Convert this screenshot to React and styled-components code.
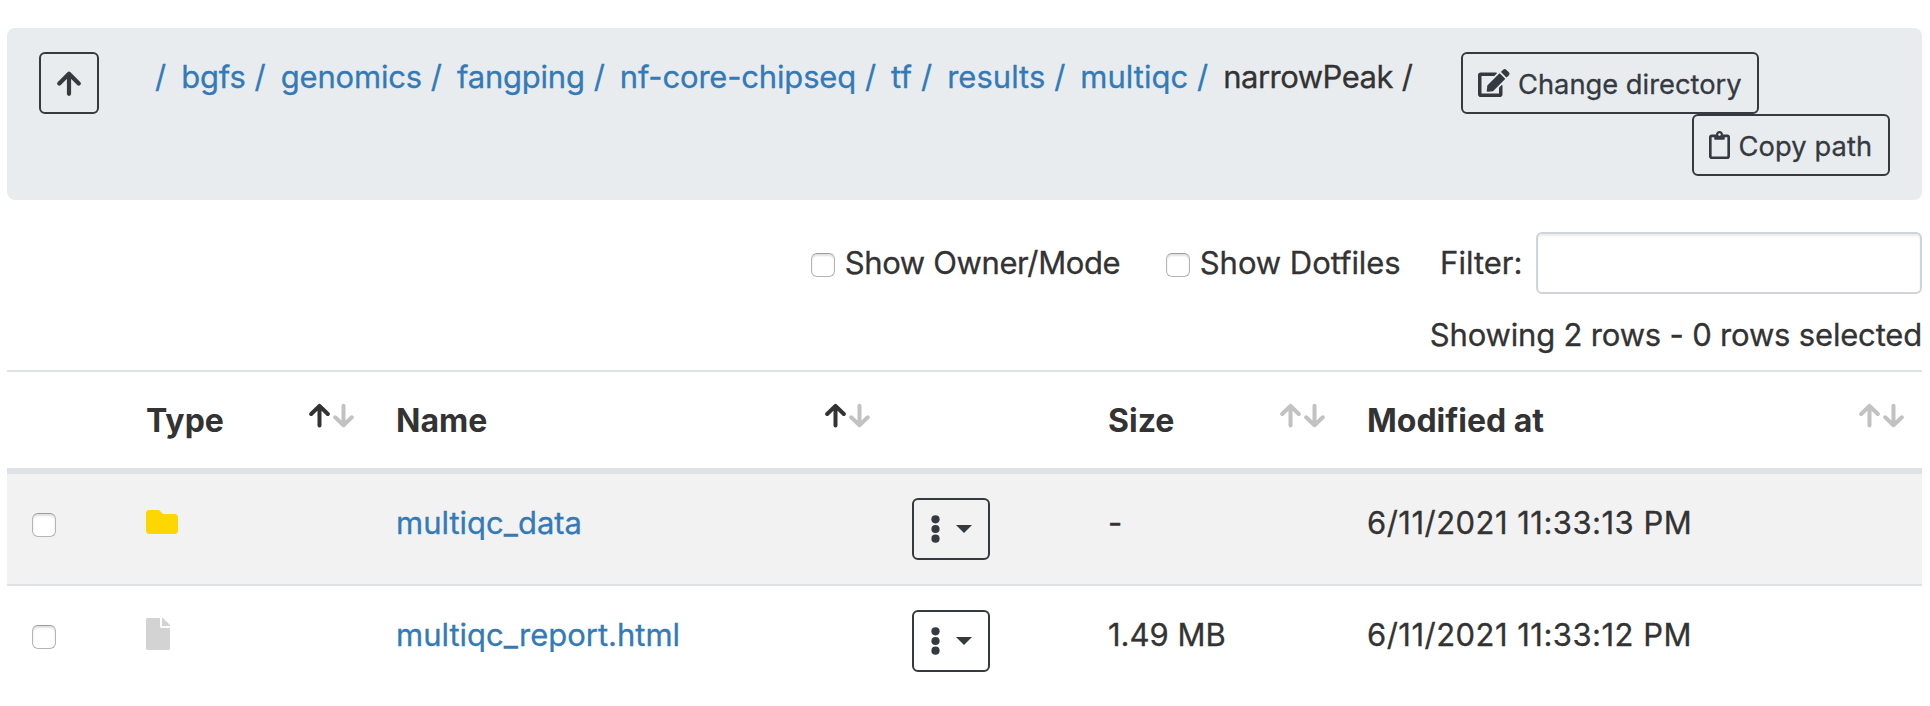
import React from "react";
import styled, { createGlobalStyle } from "styled-components";
import { FaEdit, FaRegClipboard, FaFolder, FaFile } from "react-icons/fa";

const GlobalStyle = createGlobalStyle`
  *, *::before, *::after { box-sizing: border-box; }
  body {
    margin: 0;
    background: #fff;
    color: #333;
    font-family: Inter, "Liberation Sans", sans-serif;
    font-size: 31px;
    line-height: 48px;
    -webkit-text-stroke-width: 0.3px;
  }
`;

const Page = styled.main`
  width: 1930px;
  height: 706px;
  padding: 28px 8px 0 7px;
  overflow: hidden;
`;

const PathBar = styled.nav`
  display: flex;
  align-items: flex-start;
  height: 172px;
  padding: 24px 32px;
  border-radius: 8px;
  background: #e9ecef;
`;

const Button = styled.button`
  display: flex;
  align-items: center;
  justify-content: ${(p) => (p.$center ? "center" : "flex-start")};
  flex: none;
  gap: 8.5px;
  width: ${(p) => p.$width}px;
  height: 62px;
  padding: 0 15px;
  border: 2px solid #343a40;
  border-radius: 6px;
  background: transparent;
  color: #343a40;
  font: inherit;
  font-size: 27.3px;
  line-height: 42px;
  white-space: nowrap;

  svg { flex: none; display: block; }
`;

const ButtonText = styled.span`
  padding-top: 3px;
  letter-spacing: ${(p) => p.$spacing || 0}px;
`;

const EditIcon = styled(FaEdit)`
  width: 31.5px;
  height: 28px;
`;

const ClipboardIcon = styled(FaRegClipboard)`
  width: 21px;
  height: 28px;
`;

const FolderIcon = styled(FaFolder)`
  width: 32px;
  height: 32px;
  color: #ffd700;
`;

const FileIcon = styled(FaFile)`
  width: 24px;
  height: 32px;
  color: #d3d3d3;
`;

const Crumbs = styled.ol`
  display: flex;
  flex: 1;
  gap: 15px;
  margin: 1px 0 0 56px;
  padding: 0;
  list-style: none;
  white-space: nowrap;
`;

const Crumb = styled.li`
  display: flex;
  gap: 8.9px;
  letter-spacing: ${(p) => p.$spacing}px;
  color: ${(p) => (p.$current ? "#333" : "#337ab7")};
`;

const Slash = styled.span`
  letter-spacing: 0;
`;

const Link = styled.a`
  color: #337ab7;
  text-decoration: none;
`;

const PathActions = styled.div`
  display: flex;
  flex-direction: column;
  align-items: flex-start;
  flex: none;
  width: 429px;

  & > :last-child { align-self: flex-end; }
`;

const Toolbar = styled.div`
  display: flex;
  align-items: center;
  justify-content: flex-end;
  height: 62px;
  margin-top: 32px;
  white-space: nowrap;
`;

const Option = styled.label`
  display: flex;
  align-items: center;
  gap: 10px;
  margin-right: ${(p) => p.$after}px;
  letter-spacing: ${(p) => p.$spacing}px;

  input { margin-top: 4px; }
`;

const Checkbox = styled.input.attrs({ type: "checkbox" })`
  appearance: none;
  display: block;
  flex: none;
  width: 24px;
  height: 24px;
  margin: 0;
  border: 1.5px solid #b4b4b4;
  border-top-color: #9c9c9c;
  border-radius: 6px;
  background: #fff;
  box-shadow: inset 0 2px 2px rgba(0, 0, 0, 0.12);
`;

const RowCheckbox = styled(Checkbox)`
  margin-left: 1px;
`;

const FilterLabel = styled.label`
  display: flex;
  align-items: center;
  gap: 13.6px;
`;

const FilterInput = styled.input`
  width: 386px;
  height: 62px;
  padding: 0 12px;
  border: 2px solid #ced4da;
  border-radius: 6px;
  background: #fff;
  box-shadow: inset 0 2px 2px rgba(0, 0, 0, 0.075);
  font: inherit;
`;

const Summary = styled.div`
  margin: 17px 0 11px;
  text-align: right;
  letter-spacing: -0.18px;
`;

const Table = styled.div`
  border-top: 2px solid #dee2e6;
`;

const Row = styled.div`
  display: grid;
  grid-template-columns: 115px 250px 516px 196px 259px 579px;
  align-items: start;
  height: ${(p) => (p.$first ? 110 : 112)}px;
  border-top: ${(p) => (p.$first ? "none" : "2px solid #dee2e6")};
  background: ${(p) => (p.$striped ? "#f2f2f2" : "#fff")};
`;

const HeaderRow = styled(Row)`
  height: 102px;
  border-top: none;
  border-bottom: 6px solid #dee2e6;
`;

const HeaderCell = styled.div`
  display: flex;
  justify-content: space-between;
  padding: 25px 18px 0 24px;
  font-size: 32px;
  font-weight: 700;
  -webkit-text-stroke-width: 0;
`;

const Sort = styled.span`
  display: flex;
  gap: 3px;
  padding-top: 6px;

  svg { display: block; }
`;

const Cell = styled.div`
  padding: ${(p) => p.$top || 25}px 0 0 24px;
  letter-spacing: ${(p) => p.$spacing || 0}px;
  white-space: nowrap;

  svg { display: block; }
`;

const Caret = styled.span`
  width: 0;
  height: 0;
  border: 8px solid transparent;
  border-top-color: #343a40;
  border-bottom: 0;
`;

const MenuButton = styled(Button)`
  gap: 16px;
  padding: 0 0 0 17px;
`;

function UpArrow() {
  return (
    <svg width="24" height="25" viewBox="0 0 24 25" fill="none" stroke="#343a40" strokeWidth="4.2" strokeLinecap="round" strokeLinejoin="round">
      <path d="M12 3V22.8M2.3 12.5L12 2.7L21.7 12.5" />
    </svg>
  );
}

function SortArrow({ down, active }) {
  return (
    <svg width="21" height="25" viewBox="0 0 21 25" fill="none" stroke={active ? "#333" : "#c2c2c2"} strokeWidth="4" strokeLinecap="round" strokeLinejoin="round">
      <path d={down ? "M10.5 2.7V22M2.2 14.3L10.5 22.2L18.8 14.3" : "M10.5 3V22.6M2.2 11L10.5 2.8L18.8 11"} />
    </svg>
  );
}

function SortIcon({ ascending }) {
  return (
    <Sort>
      <SortArrow active={ascending} />
      <SortArrow down />
    </Sort>
  );
}

function Dots() {
  return (
    <svg width="9" height="28" viewBox="0 0 9 28" fill="#343a40">
      <circle cx="4.5" cy="4.3" r="4.1" />
      <circle cx="4.5" cy="14" r="4.1" />
      <circle cx="4.5" cy="23.7" r="4.1" />
    </svg>
  );
}

const crumbs = [
  { name: "bgfs", spacing: -0.15 },
  { name: "genomics", spacing: -0.2 },
  { name: "fangping", spacing: -0.22 },
  { name: "nf-core-chipseq", spacing: -0.18 },
  { name: "tf", spacing: 0.1 },
  { name: "results", spacing: 0 },
  { name: "multiqc", spacing: 0 },
  { name: "narrowPeak", spacing: -0.52, current: true },
];

const files = [
  { name: "multiqc_data", folder: true, size: "-", modified: "6/11/2021 11:33:13 PM" },
  { name: "multiqc_report.html", folder: false, size: "1.49 MB", modified: "6/11/2021 11:33:12 PM" },
];

export default function App() {
  return (
    <Page>
      <GlobalStyle />
      <PathBar>
        <Button $width={60} $center aria-label="Parent directory">
          <UpArrow />
        </Button>
        <Crumbs>
          <Crumb $spacing={0}>/</Crumb>
          {crumbs.map((c) => (
            <Crumb key={c.name} $spacing={c.spacing} $current={c.current}>
              {c.current ? <span>{c.name}</span> : <Link>{c.name}</Link>}
              <Slash>/</Slash>
            </Crumb>
          ))}
        </Crumbs>
        <PathActions>
          <Button $width={298}>
            <EditIcon />
            <ButtonText>Change directory</ButtonText>
          </Button>
          <Button $width={198}>
            <ClipboardIcon />
            <ButtonText $spacing={0.1}>Copy path</ButtonText>
          </Button>
        </PathActions>
      </PathBar>

      <Toolbar>
        <Option $after={45.5} $spacing={-0.38}>
          <Checkbox />
          Show Owner/Mode
        </Option>
        <Option $after={39.5} $spacing={-0.06}>
          <Checkbox />
          Show Dotfiles
        </Option>
        <FilterLabel>
          Filter:
          <FilterInput />
        </FilterLabel>
      </Toolbar>
      <Summary>Showing 2 rows - 0 rows selected</Summary>

      <Table>
        <HeaderRow>
          <HeaderCell />
          <HeaderCell>Type<SortIcon ascending /></HeaderCell>
          <HeaderCell>Name<SortIcon ascending /></HeaderCell>
          <HeaderCell />
          <HeaderCell>Size<SortIcon /></HeaderCell>
          <HeaderCell>Modified at<SortIcon /></HeaderCell>
        </HeaderRow>
        {files.map((f, i) => (
          <Row key={f.name} $first={i === 0} $striped={i % 2 === 0}>
            <Cell $top={39}><RowCheckbox /></Cell>
            <Cell $top={32}>{f.folder ? <FolderIcon /> : <FileIcon />}</Cell>
            <Cell><Link>{f.name}</Link></Cell>
            <Cell $top={24}>
              <MenuButton $width={78} aria-label="Actions">
                <Dots />
                <Caret />
              </MenuButton>
            </Cell>
            <Cell>{f.size}</Cell>
            <Cell $spacing={0.48}>{f.modified}</Cell>
          </Row>
        ))}
      </Table>
    </Page>
  );
}
